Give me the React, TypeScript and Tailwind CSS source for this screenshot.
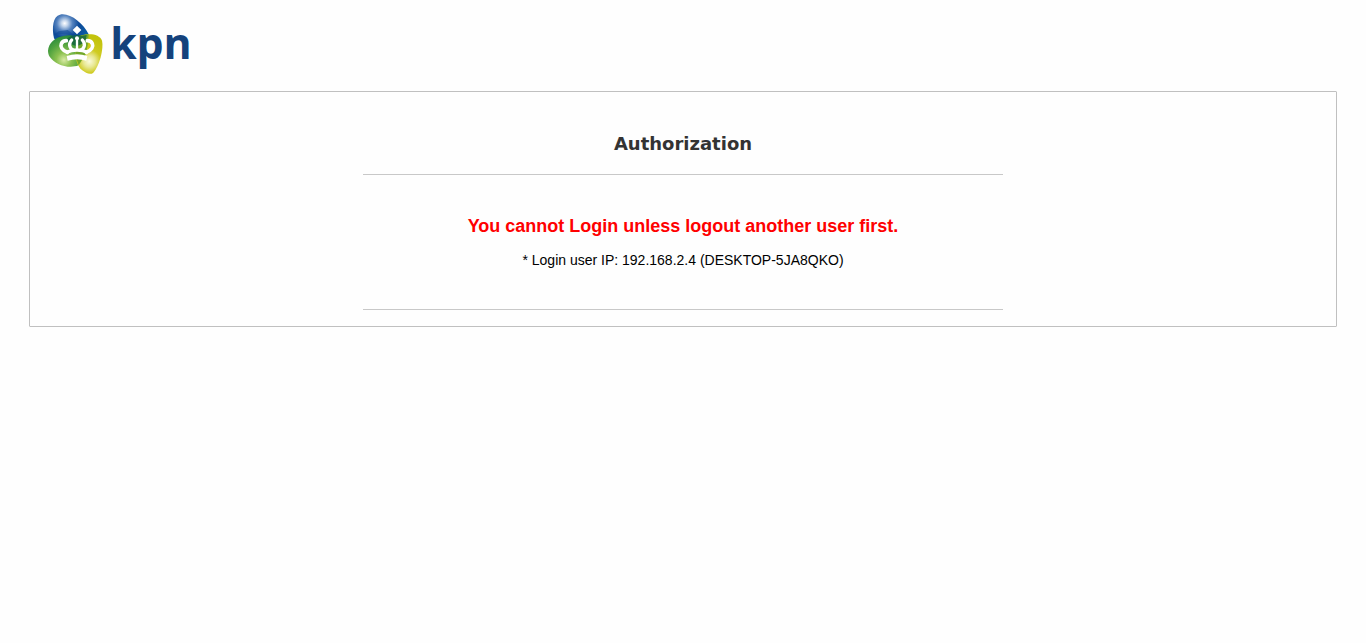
function Logo() {
  return (
    <svg className="h-[70px] w-[160px]" viewBox="0 0 480 210" role="img" aria-label="kpn">
      <defs>
        <radialGradient id="blue" gradientUnits="userSpaceOnUse" cx="74" cy="46" r="78">
          <stop offset="0" stopColor="#ffffff" />
          <stop offset="0.12" stopColor="#c4d6ec" />
          <stop offset="0.3" stopColor="#5583bf" />
          <stop offset="0.55" stopColor="#0d4a98" />
          <stop offset="1" stopColor="#0a5fa8" />
        </radialGradient>
        <radialGradient id="green" gradientUnits="userSpaceOnUse" cx="72" cy="156" r="76">
          <stop offset="0" stopColor="#d8eaa4" />
          <stop offset="0.3" stopColor="#8cc150" />
          <stop offset="0.65" stopColor="#4fa23f" />
          <stop offset="1" stopColor="#25883c" />
        </radialGradient>
        <radialGradient id="lime" gradientUnits="userSpaceOnUse" cx="148" cy="160" r="70">
          <stop offset="0" stopColor="#fbfbdc" />
          <stop offset="0.25" stopColor="#e8e893" />
          <stop offset="0.5" stopColor="#cfcb22" />
          <stop offset="1" stopColor="#c3c30c" />
        </radialGradient>
      </defs>
      <path
        d="M42 91C35 58 39 25 60 20C88 13 130 45 146 79L148 112L110 128L62 118Z"
        fill="url(#blue)"
      />
      <path
        d="M24 128C26 105 45 88 70 84C101 78 126 86 139 104C149 119 137 158 116 172C85 184 44 169 29 146C26 141 24 134 24 128Z"
        fill="url(#green)"
      />
      <path
        d="M118 84C146 75 178 77 186 98C192 121 178 174 160 194C151 202 137 195 127 187C111 174 105 150 107 128Z"
        fill="url(#lime)"
      />
      <path d="M107 128L118 84Q132 79 146 79Q145 112 137 139L116 172L108 148Z" fill="#73a82a" />
      <path d="M82 91Q101 76 127 83L140 81L136 103L111 115L84 106Z" fill="#13633f" opacity="0.8" />
      <path d="M40 82Q67 76 93 82L108 91L99 78L83 66L56 70Z" fill="#0b4795" opacity="0.55" />
      <g fill="none" stroke="#ffffff" strokeLinecap="round">
        <path d="M82 133C66 127 60 116 64 107C67 100 73 98 79 98" strokeWidth="11" />
        <path d="M139 133C155 127 161 116 157 107C154 100 148 98 142 98" strokeWidth="11" />
        <path d="M101 127C87 121 85 107 95 96" strokeWidth="10" />
        <path d="M121 127C135 121 137 107 127 96" strokeWidth="10" />
        <path d="M111 92V124" strokeWidth="7" />
      </g>
      <g fill="#ffffff">
        <path d="M111 53L124 66L111 79L98 66Z" />
        <circle cx="111" cy="91" r="6" />
        <path d="M76 129Q92 121 111 121Q130 121 146 129L142 138Q111 125 80 138Z" />
        <path d="M80 144Q111 134 142 144L139 158Q111 149 83 158Z" />
      </g>
      <text
        x="211"
        y="154"
        fill="#14427c"
        fontFamily="'Noto Sans', 'Open Sans', sans-serif"
        fontSize="128"
        fontWeight="700"
      >
        kpn
      </text>
    </svg>
  );
}

export default function App() {
  return (
    <div className="min-h-screen bg-[#fefefe] px-[29px] pt-2 font-['Liberation_Sans',Arial,sans-serif] text-black">
      <header className="mb-[13px] pl-[11px]">
        <a href="#" className="inline-block align-top">
          <Logo />
        </a>
      </header>
      <main className="rounded-[1px] border border-[#c0c0c0] px-4 pt-10 pb-4">
        <section className="mx-auto max-w-[640px] text-center">
          <h1 className="border-b border-[#c8c8c8] pb-[18px] font-['DejaVu_Sans',Verdana,sans-serif] text-lg leading-6 font-bold text-[#333333]">
            Authorization
          </h1>
          <div className="border-b border-[#c8c8c8] pt-10 pb-10">
            <p className="text-lg leading-[22px] font-bold text-[#ff0000]">
              You cannot Login unless logout another user first.
            </p>
            <p className="mt-[14px] text-sm leading-[18px]">
              * Login user IP: 192.168.2.4 (DESKTOP-5JA8QKO)
            </p>
          </div>
        </section>
      </main>
    </div>
  );
}
